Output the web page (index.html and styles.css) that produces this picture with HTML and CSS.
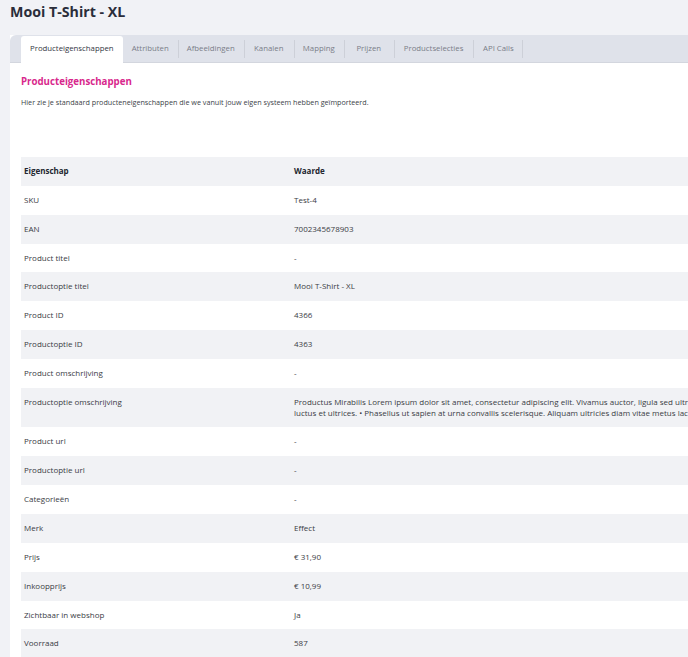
FILE: index.html
```html
<!DOCTYPE html>
<html lang="nl">
<head>
<meta charset="utf-8">
<title>Mooi T-Shirt - XL</title>
<link rel="stylesheet" href="styles.css">
</head>
<body>
<div class="page">
  <h1 class="title">Mooi T-Shirt - XL</h1>
  <div class="card">
    <nav class="tabs">
      <span class="tab active">Producteigenschappen</span>
      <span class="tab">Attributen</span>
      <span class="tab">Afbeeldingen</span>
      <span class="tab">Kanalen</span>
      <span class="tab">Mapping</span>
      <span class="tab">Prijzen</span>
      <span class="tab wide">Productselecties</span>
      <span class="tab">API Calls</span>
    </nav>
    <div class="panel">
      <h2 class="heading">Producteigenschappen</h2>
      <p class="intro">Hier zie je standaard producteneigenschappen die we vanuit jouw eigen systeem hebben geïmporteerd.</p>
      <table class="props">
        <thead>
          <tr><th>Eigenschap</th><th>Waarde</th></tr>
        </thead>
        <tbody>
          <tr><td>SKU</td><td>Test-4</td></tr>
          <tr><td>EAN</td><td>7002345678903</td></tr>
          <tr><td>Product titel</td><td>-</td></tr>
          <tr><td>Productoptie titel</td><td>Mooi T-Shirt - XL</td></tr>
          <tr><td>Product ID</td><td>4366</td></tr>
          <tr><td>Productoptie ID</td><td>4363</td></tr>
          <tr><td>Product omschrijving</td><td>-</td></tr>
          <tr><td>Productoptie omschrijving</td><td>Productus Mirabilis Lorem ipsum dolor sit amet, consectetur adipiscing elit. Vivamus auctor, ligula sed ultrices tincidunt, orci nunc<br>luctus et ultrices. • Phasellus ut sapien at urna convallis scelerisque. Aliquam ultricies diam vitae metus lacinia, vel tempus</td></tr>
          <tr><td>Product url</td><td>-</td></tr>
          <tr><td>Productoptie url</td><td>-</td></tr>
          <tr><td>Categorieën</td><td>-</td></tr>
          <tr><td>Merk</td><td>Effect</td></tr>
          <tr><td>Prijs</td><td>€ 31,90</td></tr>
          <tr><td>Inkoopprijs</td><td>€ 10,99</td></tr>
          <tr><td>Zichtbaar in webshop</td><td>Ja</td></tr>
          <tr><td>Voorraad</td><td>587</td></tr>
        </tbody>
      </table>
    </div>
  </div>
</div>
</body>
</html>
```
FILE: styles.css
```css
html, body {
  margin: 0;
  padding: 0;
  overflow: hidden;
  background: #f1f2f6;
}
body {
  font-family: "Open Sans", "Liberation Sans", sans-serif;
  color: #3a3c44;
  font-size: 7.8px;
}
.page {
  width: 1100px;
  padding: 0 0 0 10px;
}
.title {
  margin: 0;
  padding-top: 3px;
  height: 32px;
  font-family: "Open Sans", sans-serif;
  font-weight: 700;
  font-size: 14.2px;
  line-height: 18px;
  color: #2a2d3a;
}
.card {
  background: #fff;
}
.tabs {
  display: flex;
  align-items: flex-end;
  height: 26px;
  padding: 1px 0 0 11px;
  background: #dfe2ea;
  border-top-left-radius: 6px;
  border-bottom: 1px solid #d3d6de;
}
.tab {
  position: relative;
  box-sizing: border-box;
  min-width: 50px;
  padding: 0 9px;
  height: 26px;
  line-height: 25px;
  font-size: 7.8px;
  text-align: center;
  color: #7a7d88;
  white-space: nowrap;
}
.tab.wide {
  padding: 0 10px;
}
.tab + .tab::before {
  content: "";
  position: absolute;
  left: 0;
  top: 4px;
  bottom: 4px;
  width: 1px;
  background: #cdd0d8;
}
.tab:last-child::after {
  content: "";
  position: absolute;
  right: 0;
  top: 4px;
  bottom: 4px;
  width: 1px;
  background: #cdd0d8;
}
.tab.active {
  background: #fff;
  color: #33363f;
  border-top-left-radius: 3px;
  border-top-right-radius: 3px;
  height: 27px;
  margin-bottom: -1px;
}
.tab.active + .tab::before {
  display: none;
}
.panel {
  padding: 12px 0 0 11px;
}
.heading {
  margin: 0;
  font-weight: 700;
  font-size: 9.7px;
  line-height: 13px;
  color: #d8288c;
}
.intro {
  margin: 9px 0 0;
  font-size: 7.2px;
  line-height: 11px;
  color: #3c3f48;
}
.props {
  margin-top: 49px;
  width: 1000px;
  border-collapse: collapse;
}
.props th, .props td {
  text-align: left;
  padding: 9px 3px;
  line-height: 10.85px;
  vertical-align: top;
  font-size: 8px;
}
.props th {
  font-weight: 700;
  color: #23262f;
}
.props th:first-child, .props td:first-child {
  width: 264px;
}
.props thead tr {
  background: #f1f2f5;
}
.props tbody tr:nth-child(even) {
  background: #f1f2f5;
}
```
